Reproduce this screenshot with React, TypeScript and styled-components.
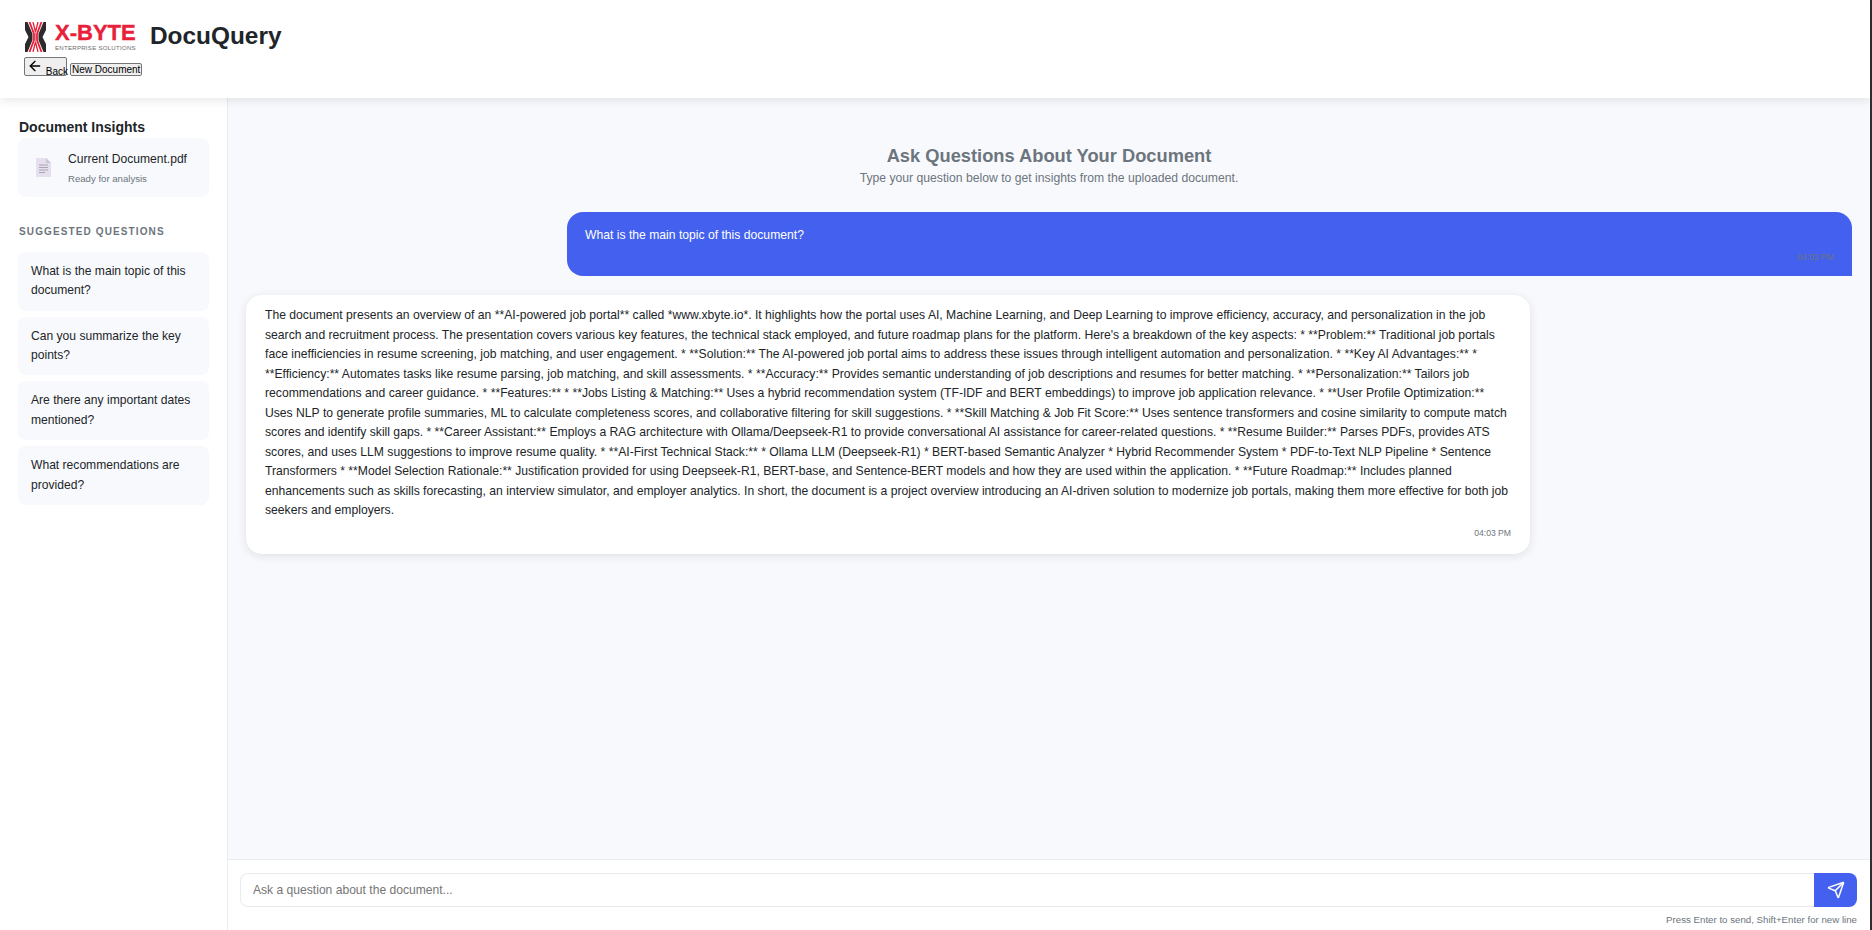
import { createGlobalStyle, styled } from "styled-components"
import { ArrowLeft, Send } from "lucide-react"

const GlobalStyle = createGlobalStyle`
    html, body, #root {
        margin: 0;
        height: 100%;
    }
    body {
        font-family: "Liberation Sans", Arial, sans-serif;
        color: #212529;
        background: #2f2f2f;
        overflow: hidden;
    }
    * {
        box-sizing: border-box;
    }
`

const QUESTIONS = [
    "What is the main topic of this document?",
    "Can you summarize the key points?",
    "Are there any important dates mentioned?",
    "What recommendations are provided?",
]

const ANSWER = "The document presents an overview of an **AI-powered job portal** called *www.xbyte.io*. It highlights how the portal uses AI, Machine Learning, and Deep Learning to improve efficiency, accuracy, and personalization in the job search and recruitment process. The presentation covers various key features, the technical stack employed, and future roadmap plans for the platform. Here's a breakdown of the key aspects: * **Problem:** Traditional job portals face inefficiencies in resume screening, job matching, and user engagement. * **Solution:** The AI-powered job portal aims to address these issues through intelligent automation and personalization. * **Key AI Advantages:** * **Efficiency:** Automates tasks like resume parsing, job matching, and skill assessments. * **Accuracy:** Provides semantic understanding of job descriptions and resumes for better matching. * **Personalization:** Tailors job recommendations and career guidance. * **Features:** * **Jobs Listing & Matching:** Uses a hybrid recommendation system (TF-IDF and BERT embeddings) to improve job application relevance. * **User Profile Optimization:** Uses NLP to generate profile summaries, ML to calculate completeness scores, and collaborative filtering for skill suggestions. * **Skill Matching & Job Fit Score:** Uses sentence transformers and cosine similarity to compute match scores and identify skill gaps. * **Career Assistant:** Employs a RAG architecture with Ollama/Deepseek-R1 to provide conversational AI assistance for career-related questions. * **Resume Builder:** Parses PDFs, provides ATS scores, and uses LLM suggestions to improve resume quality. * **AI-First Technical Stack:** * Ollama LLM (Deepseek-R1) * BERT-based Semantic Analyzer * Hybrid Recommender System * PDF-to-Text NLP Pipeline * Sentence Transformers * **Model Selection Rationale:** Justification provided for using Deepseek-R1, BERT-base, and Sentence-BERT models and how they are used within the application. * **Future Roadmap:** Includes planned enhancements such as skills forecasting, an interview simulator, and employer analytics. In short, the document is a project overview introducing an AI-driven solution to modernize job portals, making them more effective for both job seekers and employers."

function LogoMark() {
    return <svg width="21" height="30" viewBox="0 0 21 30">
        <path d="M0 0h2.500l5 12v6l-5 12H0v-8l3.500-7L0 8z" fill="#2b2b2b"/>
        <path d="M21 0h-2.500l-5 12v6l5 12H21v-8l-3.500-7L21 8z" fill="#2b2b2b"/>
        <path d="M4.500 0l4.500 12v6L4.500 30M16.500 0L12 12v6l4.500 12" stroke="#e8213a" strokeWidth="1.800" fill="none"/>
        <path d="M8 0l2.500 10L13 0M8 30l2.500-10L13 30" stroke="#e8213a" strokeWidth="1.300" fill="none"/>
        <path d="M10.500 10v10" stroke="#f08a98" strokeWidth="1" fill="none"/>
    </svg>
}

function DocIcon() {
    return <svg width="15" height="19" viewBox="0 0 15 19">
        <path d="M0 0h10l5 5v14H0z" fill="#e6dff0"/>
        <path d="M10 0l5 5h-5z" fill="#c9c6d0"/>
        <path d="M3 7h9M3 9.500h9M3 12h9M3 14.500h6" stroke="#a9a6b0" strokeWidth="1" fill="none"/>
    </svg>
}

export default function App() {
    return <Page>
        <GlobalStyle/>
        <Header>
            <BrandRow>
                <Logo>
                    <LogoMark/>
                    <LogoText>
                        <LogoName>X-BYTE</LogoName>
                        <LogoTag>ENTERPRISE SOLUTIONS</LogoTag>
                    </LogoText>
                </Logo>
                <Title>DocuQuery</Title>
            </BrandRow>
            <HeaderActions>
                <BackButton><ArrowLeft size={16} strokeWidth={2}/> Back</BackButton>
                <PlainButton>New Document</PlainButton>
            </HeaderActions>
        </Header>
        <Body>
            <Sidebar>
                <SideTitle>Document Insights</SideTitle>
                <DocCard>
                    <DocIcon/>
                    <div>
                        <DocName>Current Document.pdf</DocName>
                        <DocStatus>Ready for analysis</DocStatus>
                    </div>
                </DocCard>
                <SectionLabel>SUGGESTED QUESTIONS</SectionLabel>
                <QuestionList>
                    {QUESTIONS.map(q => <Question key={q}>{q}</Question>)}
                </QuestionList>
            </Sidebar>
            <Main>
                <Messages>
                    <Intro>
                        <IntroTitle>Ask Questions About Your Document</IntroTitle>
                        <IntroText>Type your question below to get insights from the uploaded document.</IntroText>
                    </Intro>
                    <UserBubble>
                        <MessageText>What is the main topic of this document?</MessageText>
                        <Time>04:02 PM</Time>
                    </UserBubble>
                    <BotBubble>
                        <MessageText>{ANSWER}</MessageText>
                        <Time>04:03 PM</Time>
                    </BotBubble>
                </Messages>
                <Composer>
                    <InputRow>
                        <Input placeholder="Ask a question about the document..."/>
                        <SendButton><Send size={18}/></SendButton>
                    </InputRow>
                    <Hint>Press Enter to send, Shift+Enter for new line</Hint>
                </Composer>
            </Main>
        </Body>
    </Page>
}

const Page = styled.div`
    display: flex;
    flex-direction: column;
    height: 930px;
    width: 1870px;
    background: #fff;
`

const Header = styled.header`
    flex: 0 0 98px;
    padding: 22px 24px 0 25px;
    background: #fff;
    box-shadow: 0 2px 10px rgba(0, 0, 0, 0.1);
    position: relative;
    z-index: 1;
`

const BrandRow = styled.div`
    display: flex;
    align-items: center;
    gap: 14px;
    height: 30px;
`

const Logo = styled.div`
    display: flex;
    align-items: center;
    gap: 9px;
    width: 111px;
`

const LogoText = styled.div`
    display: flex;
    flex-direction: column;
`

const LogoName = styled.span`
    font-size: 22px;
    line-height: 22px;
    font-weight: 700;
    color: #e8213a;
    white-space: nowrap;
    -webkit-text-stroke: 0.4px #e8213a;
`

const LogoTag = styled.span`
    font-size: 6.100px;
    line-height: 8px;
    letter-spacing: 0.25px;
    color: #6c6c6c;
    white-space: nowrap;
`

const Title = styled.h1`
    margin: -2px 0 0;
    font-size: 24.400px;
    font-weight: 700;
    color: #212529;
`

const HeaderActions = styled.div`
    display: flex;
    align-items: flex-end;
    gap: 3px;
    margin: 5px 0 0 -1px;
`

const NativeButton = styled.button`
    padding: 0 1px;
    font-family: inherit;
    font-size: 10px;
    color: #000;
    background: #efefef;
    border: 1px solid #767676;
    border-radius: 2px;
`

const BackButton = styled(NativeButton)`
    width: 43px;
    height: 19px;
    padding: 0 2px;
    white-space: nowrap;
    svg {
        vertical-align: 1px;
    }
`

const PlainButton = styled(NativeButton)`
    height: 13px;
    line-height: 10px;
    white-space: nowrap;
`

const Body = styled.div`
    flex: 1;
    min-height: 0;
    display: flex;
`

const Sidebar = styled.aside`
    flex: 0 0 228px;
    padding: 21px 18px;
    background: #fff;
    border-right: 1px solid #e9ecef;
`

const SideTitle = styled.h3`
    margin: 0 0 2px 1px;
    font-size: 14px;
    line-height: 17px;
    font-weight: 700;
    color: #212529;
`

const DocCard = styled.div`
    display: flex;
    align-items: center;
    gap: 17px;
    height: 59px;
    padding: 0 17px 0 18px;
    background: #f8f9fc;
    border-radius: 8px;
`

const DocName = styled.div`
    font-size: 12.100px;
    line-height: 15px;
`

const DocStatus = styled.div`
    margin-top: 6px;
    font-size: 9.600px;
    line-height: 11px;
    color: #6c757d;
`

const SectionLabel = styled.h4`
    margin: 29px 0 14px;
    padding-left: 1px;
    font-size: 10px;
    line-height: 12px;
    font-weight: 700;
    letter-spacing: 1.120px;
    color: #6c757d;
`

const QuestionList = styled.div`
    display: flex;
    flex-direction: column;
    gap: 6px;
`

const Question = styled.div`
    padding: 10px 13px;
    font-size: 12.100px;
    line-height: 19.360px;
    background: #f8f9fc;
    border-radius: 8px;
`

const Main = styled.main`
    flex: 1;
    min-width: 0;
    display: flex;
    flex-direction: column;
    background: #f8f9fc;
`

const Messages = styled.div`
    flex: 1;
    min-height: 0;
    display: flex;
    flex-direction: column;
    padding: 47px 18px 0;
`

const Intro = styled.div`
    text-align: center;
    color: #6c757d;
`

const IntroTitle = styled.h3`
    margin: 0;
    font-size: 18.300px;
    line-height: 22px;
    font-weight: 700;
`

const IntroText = styled.p`
    margin: 4px 0 0;
    font-size: 12.200px;
    line-height: 14px;
`

const UserBubble = styled.div`
    align-self: flex-end;
    width: 1285px;
    margin-top: 27px;
    padding: 14px 18px 13px;
    color: #fff;
    background: #4361ee;
    border-radius: 16px 16px 0 16px;
`

const BotBubble = styled.div`
    width: 1284px;
    margin-top: 19px;
    padding: 11px 19px 15px;
    background: #fff;
    border-radius: 16px;
    box-shadow: 0 2px 10px rgba(0, 0, 0, 0.1);
`

const MessageText = styled.div`
    font-size: 12.170px;
    line-height: 1.6;
`

const Time = styled.div`
    margin-top: 7px;
    font-size: 8.600px;
    line-height: 11px;
    text-align: right;
    color: #6c757d;
`

const Composer = styled.div`
    flex: 0 0 71px;
    padding: 13px 13px 0 12px;
    background: #fff;
    border-top: 1px solid #e9ecef;
`

const InputRow = styled.div`
    display: flex;
    height: 34px;
`

const Input = styled.input`
    flex: 1;
    min-width: 0;
    padding: 0 12px;
    font-family: inherit;
    font-size: 12.100px;
    background: #fff;
    border: 1px solid #e9ecef;
    border-right: none;
    border-radius: 8px 0 0 8px;
    outline: none;
    &::placeholder {
        color: #757575;
    }
`

const SendButton = styled.button`
    flex: 0 0 43px;
    display: flex;
    align-items: center;
    justify-content: center;
    padding: 0;
    color: #fff;
    background: #4361ee;
    border: none;
    border-radius: 0 8px 8px 0;
`

const Hint = styled.div`
    margin-top: 7px;
    font-size: 9.700px;
    line-height: 11px;
    text-align: right;
    color: #6c757d;
`
